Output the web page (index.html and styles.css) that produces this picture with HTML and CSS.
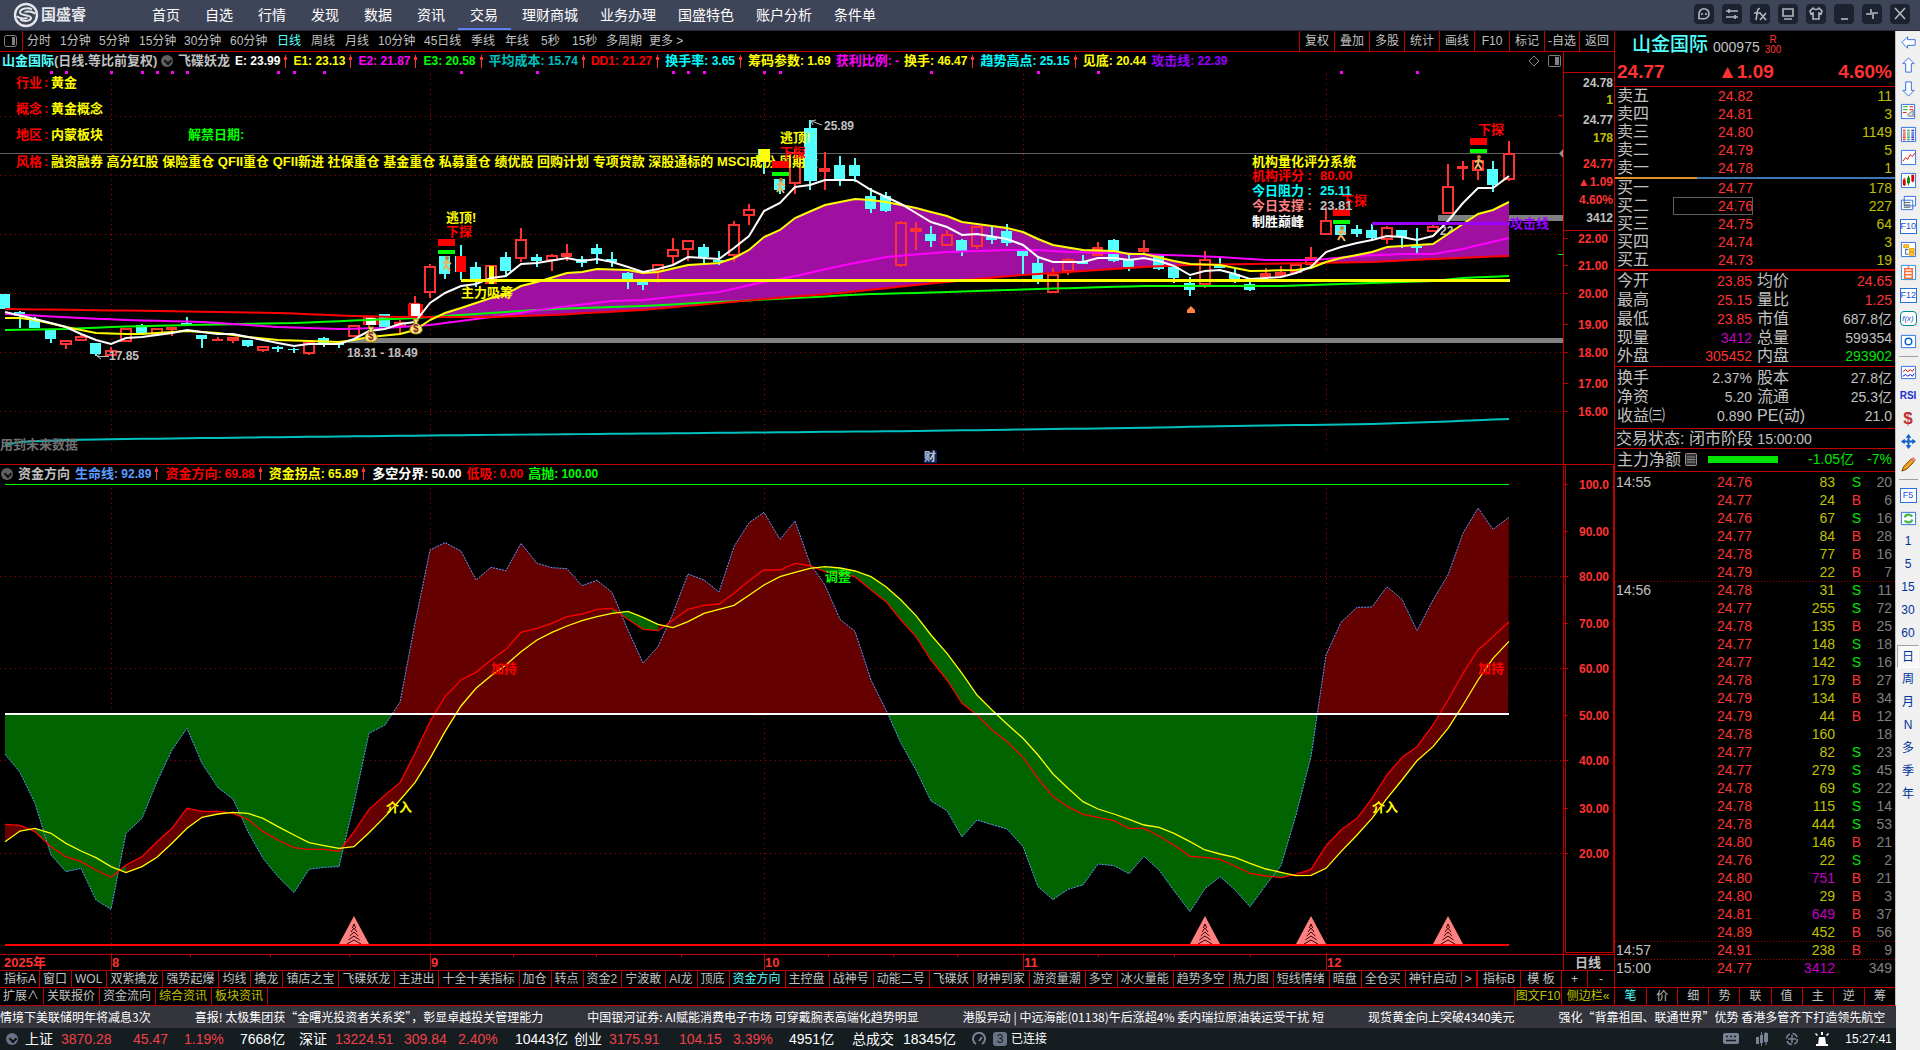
FILE: index.html
```html
<!DOCTYPE html>
<html lang="zh-CN">
<head>
<meta charset="utf-8">
<title>国盛睿 - 山金国际</title>
<link rel="stylesheet" href="styles.css">
</head>
<body>
<header class="topbar">
  <div class="brand">
    <svg width="26" height="26" viewBox="0 0 26 26" fill="none" stroke="#e4e6ea"><circle cx="13" cy="13" r="11" stroke-width="2.4"/><path d="M19 7.500C16 5.500 7 6 7 10.500c0 3.500 11 2 11 5.500 0 3-7 4-11 1.500M22 12c-2-3-10-3-10-1.500M4 14c2 3 10 3 10 1.500" stroke-width="2"/></svg>
    <b>国盛睿</b>
  </div>
  <nav class="mainnav">
    <a href="#">首页</a><a href="#">自选</a><a href="#">行情</a><a href="#">发现</a><a href="#">数据</a><a href="#">资讯</a><a href="#" class="on">交易</a><a href="#">理财商城</a><a href="#">业务办理</a><a href="#">国盛特色</a><a href="#">账户分析</a><a href="#">条件单</a>
  </nav>
  <div class="winbtns">
    <button aria-label="消息"><svg viewBox="0 0 20 20"><path d="M5 14.500V10a5 5 0 1 1 5 4.800z"/><path d="M8 9v2M12 9v2"/></svg></button>
    <button aria-label="设置"><svg viewBox="0 0 20 20"><path d="M4 7h12M4 13h12M7 5v4M13 11v4"/></svg></button>
    <button aria-label="公式"><svg viewBox="0 0 20 20"><path d="M4 9h7M10 4.500C7 4 7.500 8 6 16M10 9l6 7M16 9l-6 7"/></svg></button>
    <button aria-label="屏幕"><svg viewBox="0 0 20 20"><path d="M5 5h10v7H5zM6 15h8"/></svg></button>
    <button aria-label="皮肤"><svg viewBox="0 0 20 20"><path d="M7 4L4 7l1 3 2-1v6h6V9l2 1 1-3-3-3c-1 2-5 2-6 0z"/></svg></button>
    <button aria-label="最小化"><svg viewBox="0 0 20 20"><path d="M7 15h7"/></svg></button>
    <button aria-label="还原"><svg viewBox="0 0 20 20"><path d="M9 5v5H4M11 15v-6h5"/></svg></button>
    <button aria-label="关闭"><svg viewBox="0 0 20 20"><path d="M5 4l10 11M15 4L5 15"/></svg></button>
  </div>
</header>

<div class="shell">
<div class="desk">
<div class="work">
  <main class="charts">
    <div class="periodbar">
      <span class="panelicon"><svg width="13" height="12" viewBox="0 0 13 12"><rect x=".5" y=".5" width="12" height="11" rx="2" fill="none" stroke="#808080"/><path d="M8 2h3v8H8z" fill="#808080"/></svg></span>
      <div class="periods">
        <button>分时</button><button>1分钟</button><button>5分钟</button><button>15分钟</button><button>30分钟</button><button>60分钟</button><button class="on">日线</button><button>周线</button><button>月线</button><button>10分钟</button><button>45日线</button><button>季线</button><button>年线</button><button>5秒</button><button>15秒</button><button>多周期</button><button>更多&nbsp;&gt;</button>
      </div>
      <div class="tools">
        <button>复权</button><button>叠加</button><button>多股</button><button>统计</button><button>画线</button><button>F10</button><button>标记</button><button>-自选</button><button>返回</button>
      </div>
    </div>

    <div class="legend main-legend">
      <span class="stock"><span class="aqua">山金国际</span>(日线.等比前复权)</span>
      <i class="drop"></i>
      <span>飞碟妖龙</span>
      <span class="white"><b>E: 23.99</b><i class="up"></i></span>
      <span class="yellow"><b>E1: 23.13</b><i class="up"></i></span>
      <span class="magenta"><b>E2: 21.87</b><i class="up"></i></span>
      <span class="lime"><b>E3: 20.58</b><i class="up"></i></span>
      <span class="teal">平均成本<b>: 15.74</b><i class="up"></i></span>
      <span class="red"><b>DD1: 21.27</b><i class="up"></i></span>
      <span class="cyan">换手率<b>: 3.65</b><i class="up"></i></span>
      <span class="yellow">筹码参数<b>: 1.69</b></span>
      <span class="magenta">获利比例<b>: -</b></span>
      <span class="yellow">换手<b>: 46.47</b><i class="up"></i></span>
      <span class="cyan">趋势高点<b>: 25.15</b><i class="up"></i></span>
      <span class="yellow">见底<b>: 20.44</b></span>
      <span class="violet">攻击线<b>: 22.39</b></span>
      <span class="corner"><svg width="34" height="12" viewBox="0 0 34 12" fill="none" stroke="#808080"><path d="M6 1l5 5-5 5-5-5z"/><rect x="20.500" y=".5" width="12" height="11" rx="1"/><path d="M27 2h4v8h-4z" fill="#808080" stroke="none"/></svg></span>
    </div>
    <svg id="kline" class="pane kpane" viewBox="0 70 1614 394" preserveAspectRatio="xMidYMid meet"></svg>

    <div class="legend sub-legend">
      <i class="drop"></i>
      <span>资金方向</span>
      <span class="blue">生命线<b>: 92.89</b><i class="up"></i></span>
      <span class="red">资金方向<b>: 69.88</b><i class="up"></i></span>
      <span class="yellow">资金拐点<b>: 65.89</b><i class="up"></i></span>
      <span class="white">多空分界<b>: 50.00</b></span>
      <span class="red">低吸<b>: 0.00</b></span>
      <span class="lime">高抛<b>: 100.00</b></span>
    </div>
    <svg id="flow" class="pane fpane" viewBox="0 482 1614 488" preserveAspectRatio="xMidYMid meet"></svg>

    <div class="tabs">
      <button class="first">指标A</button><button>窗口</button><button>WOL</button><button>双紫擒龙</button><button>强势起爆</button><button>均线</button><button>擒龙</button><button>镇店之宝</button><button>飞碟妖龙</button><button>主进出</button><button>十全十美指标</button><button>加仓</button><button>转点</button><button>资金2</button><button>宁波敢</button><button>AI龙</button><button>顶底</button><button class="on">资金方向</button><button>主控盘</button><button>战神号</button><button>动能二号</button><button>飞碟妖</button><button>财神到家</button><button>游资量潮</button><button>多空</button><button>冰火量能</button><button>趋势多空</button><button>热力图</button><button>短线情绪</button><button>暗盘</button><button>全仓买</button><button>神针启动</button><button>&gt;</button>
      <span class="tabs-end"><button>指标B</button><button>模 板</button><button>+</button><button>-</button></span>
    </div>
    <div class="tabs">
      <button>扩展∧</button><button>关联报价</button><button>资金流向</button><button class="gold">综合资讯</button><button class="gold">板块资讯</button>
      <span class="tabs-end side"><button class="gold">图文F10</button><button class="gold">侧边栏«</button></span>
    </div>
  </main>

  <aside class="quote">
    <div class="qhead">
      <div class="qname"><b>山金国际</b><span>000975</span><small>R<br>300</small></div>
      <div class="qprice"><span>24.77</span><span>▲1.09</span><span>4.60%</span></div>
    </div>
    <table class="book">
      <tr><th>卖五</th><td>24.82</td><td>11</td></tr>
      <tr><th>卖四</th><td>24.81</td><td>3</td></tr>
      <tr><th>卖三</th><td>24.80</td><td>1149</td></tr>
      <tr><th>卖二</th><td>24.79</td><td>5</td></tr>
      <tr><th>卖一</th><td>24.78</td><td>1</td></tr>
    </table>
    <div class="ratio"></div>
    <table class="book bids">
      <tr><th>买一</th><td>24.77</td><td>178</td></tr>
      <tr class="mark"><th>买二</th><td>24.76</td><td>227</td></tr>
      <tr><th>买三</th><td>24.75</td><td>64</td></tr>
      <tr><th>买四</th><td>24.74</td><td>3</td></tr>
      <tr><th>买五</th><td>24.73</td><td>19</td></tr>
    </table>
    <table class="stats">
      <tr><th>今开</th><td class="up-c">23.85</td><th>均价</th><td class="up-c">24.65</td></tr>
      <tr><th>最高</th><td class="up-c">25.15</td><th>量比</th><td class="up-c">1.25</td></tr>
      <tr><th>最低</th><td class="up-c">23.85</td><th>市值</th><td>687.8亿</td></tr>
      <tr><th>现量</th><td class="big">3412</td><th>总量</th><td>599354</td></tr>
      <tr><th>外盘</th><td class="up-c">305452</th><th>内盘</th><td class="dn-c">293902</td></tr>
    </table>
    <table class="stats basics">
      <tr><th>换手</th><td>2.37%</td><th>股本</th><td>27.8亿</td></tr>
      <tr><th>净资</th><td>5.20</td><th>流通</th><td>25.3亿</td></tr>
      <tr><th>收益㈢</th><td>0.890</td><th>PE(动)</th><td>21.0</td></tr>
    </table>
    <div class="state">交易状态: 闭市阶段 <span>15:00:00</span></div>
    <div class="netflow"><span>主力净额</span><svg width="12" height="13" viewBox="0 0 12 13"><rect x=".5" y=".5" width="11" height="12" rx="1" fill="#333" stroke="#909090"/><path d="M2 4h8M2 6.500h8M2 9h8" stroke="#909090"/></svg><i></i><b>-1.05亿</b><b>-7%</b></div>
    <table class="ticks"><tbody id="ticks"></tbody></table>
    <div class="qtabs"><button class="on">笔</button><button>价</button><button>细</button><button>势</button><button>联</button><button>值</button><button>主</button><button>逆</button><button>筹</button></div>
  </aside>
</div>

<div class="ticker"><span>情境下美联储明年将减息3次</span><span>喜报! 太极集团获“金曙光投资者关系奖”，彰显卓越投关管理能力</span><span>中国银河证券: AI赋能消费电子市场 可穿戴腕表高端化趋势明显</span><span>港股异动 | 中远海能(01138)午后涨超4% 委内瑞拉原油装运受干扰 短</span><span>现货黄金向上突破4340美元</span><span>强化“背靠祖国、联通世界”优势 香港多管齐下打造领先航空</span></div>

<footer class="status">
  <i class="drop"></i>
  <dl class="indices">
    <dt>上证</dt><dd class="r">3870.28</dd><dd class="r">45.47</dd><dd class="r">1.19%</dd><dd>7668亿</dd>
    <dt>深证</dt><dd class="r">13224.51</dd><dd class="r">309.84</dd><dd class="r">2.40%</dd><dd>10443亿</dd>
    <dt>创业</dt><dd class="r">3175.91</dd><dd class="r">104.15</dd><dd class="r">3.39%</dd><dd>4951亿</dd>
    <dt>总成交</dt><dd>18345亿</dd>
  </dl>
  <svg width="14" height="14" viewBox="0 0 14 14" fill="none" stroke="#7a8296" stroke-width="2"><path d="M4 12a6 6 0 1 1 6 0M7 9l3-4"/></svg>
  <span class="badge">3</span><span class="conn">已连接</span>
  <div class="sysicons">
    <svg width="16" height="12" viewBox="0 0 16 12"><rect width="16" height="11" rx="2" fill="#7a8296"/><path d="M3 3.500h2M7 3.500h2M11 3.500h2M3 7.500h10" stroke="#151d21" stroke-width="1.500"/></svg>
    <svg width="14" height="14" viewBox="0 0 14 14" fill="#7a8296"><path d="M1 5h3v7H1zM5 3h3v8H5zM9 1h4v9H9zM6 0h1v14H6zM10.500 0h1v13h-1z"/></svg>
    <svg width="14" height="14" viewBox="0 0 14 14" fill="none" stroke="#7a8296" stroke-width="1.500"><circle cx="7" cy="7" r="5.500" stroke-dasharray="6 2.600"/><path d="M7 3v8M3 7h8"/></svg>
    <svg width="14" height="14" viewBox="0 0 14 14" fill="#fff"><path d="M4 5h6l1 7h2v2H1v-2h2zM1 1l2 2-1 1-2-2zM13 1l-2 2 1 1 2-2zM6 0h2v3H6z"/></svg>
    <time>15:27:41</time>
  </div>
</footer>
</div>

<nav class="rail">
  <button aria-label="后退"><svg viewBox="0 0 18 18"><path d="M2 9l6-6v3h8v6H8v3z" fill="#fff" stroke="#2a6fe0"/></svg></button>
  <button aria-label="上移"><svg viewBox="0 0 18 18"><path d="M9 1l6 6h-3v9H6V7H3z" fill="#fff" stroke="#2a6fe0"/></svg></button>
  <button aria-label="下移"><svg viewBox="0 0 18 18"><path d="M9 17l6-6h-3V2H6v9H3z" fill="#fff" stroke="#2a6fe0"/></svg></button>
  <button aria-label="报价"><svg viewBox="0 0 18 18"><path d="M1.500 1.500h14v15h-14z" fill="#fff" stroke="#2a6fe0"/><path d="M3 4h5M3 7h5" stroke="#0a0"/><path d="M10 4h4M10 7h4M3 10h4" stroke="#d00"/><path d="M8 12l6-4v6H9z" fill="#ddd" stroke="#777"/></svg></button>
  <button aria-label="列表"><svg viewBox="0 0 18 18"><path d="M1.500 1.500h15v15h-15z" fill="#fff" stroke="#2a6fe0"/><g stroke-dasharray="1 1" stroke-width="3"><path d="M4.500 4v11" stroke="#d00"/><path d="M9 4v11" stroke="#093"/><path d="M13.500 4v11" stroke="#00c"/></g></svg></button>
  <button aria-label="分时"><svg viewBox="0 0 18 18"><path d="M1.500 1.500h15v15h-15z" fill="#fff" stroke="#2a6fe0"/><path d="M3 13l3-4 2 2 3-5 2 2 3-4" fill="none" stroke="#d00"/></svg></button>
  <button aria-label="K线"><svg viewBox="0 0 18 18"><path d="M1.500 1.500h15v15h-15z" fill="#fff" stroke="#2a6fe0"/><path d="M4 9h1v4H4zM13 4h1v5h-1z" stroke="#d00" stroke-width="2"/><path d="M4.500 6v9M13.500 3v8" stroke="#d00"/><path d="M8.500 7h1v4h-1z" stroke="#080" stroke-width="2"/><path d="M9 4v10" stroke="#080"/></svg></button>
  <button aria-label="资料"><svg viewBox="0 0 18 18"><path d="M4.500 1.500h12v10h-12zM1.500 5.500h12v10h-12z" fill="#fff" stroke="#2a6fe0"/><path d="M4 8h7M4 10.500h7M4 13h7" stroke="#555"/></svg></button>
  <button class="box">F10</button>
  <button aria-label="树"><svg viewBox="0 0 18 18"><path d="M1.500 1.500h15v15h-15z" fill="#fff" stroke="#2a6fe0"/><path d="M4 4h5v3H4zM10 8h5v3h-5zM10 12h5v3h-5z" fill="#fc3" stroke="#e90"/><path d="M6 8v6h3M6 9h3" stroke="#36a" fill="none"/></svg></button>
  <button aria-label="自选"><svg viewBox="0 0 18 18"><path d="M1.500 1.500h15v15h-15z" fill="#fff" stroke="#1a8fe0"/><path d="M5 5h8v10H5zM5 8h8M5 11.500h8M9 2.500V5" fill="#fff" stroke="#f97040" stroke-width="1.600"/></svg></button>
  <button class="box">F12</button>
  <button class="box fx">f(x)</button>
  <button aria-label="圆"><svg viewBox="0 0 18 18"><path d="M1.500 2.500h15v13h-15z" fill="#fff" stroke="#2a6fe0"/><circle cx="9" cy="9" r="3.500" fill="none" stroke="#06c" stroke-width="1.500"/></svg></button>
  <hr>
  <button aria-label="波浪"><svg viewBox="0 0 18 18"><path d="M1.500 2.500h15v13h-15z" fill="#fff" stroke="#2a6fe0"/><path d="M3 8l3-2 2 2 3-2 2 2 2-3" fill="none" stroke="#d00"/><path d="M3 13l3-2 2 2 3-2 2 2 2-3" fill="none" stroke="#00c"/></svg></button>
  <button class="rsi">RSI</button>
  <button class="dollar">$</button>
  <button aria-label="移动"><svg viewBox="0 0 18 18"><path d="M9 1l3 4h-2v3h3V6l4 3-4 3v-2h-3v3h2l-3 4-3-4h2v-3H5v2L1 9l4-3v2h3V5H6z" fill="#0a5fc8"/></svg></button>
  <button aria-label="画笔"><svg viewBox="0 0 18 18"><path d="M2 16l2-5 8-8 3 3-8 8z" fill="#f0a020" stroke="#704000"/><path d="M12 3l2-2 3 3-2 2z" fill="#f08080"/></svg></button>
  <hr>
  <button class="box">F5</button>
  <button aria-label="刷新"><svg viewBox="0 0 18 18"><path d="M1.500 2.500h15v13h-15z" fill="#fff" stroke="#2a6fe0"/><path d="M5 8c1-4 6-4 8-1M13 10c-1 4-6 4-8 1" fill="none" stroke="#4b4" stroke-width="2.500"/></svg></button>
  <button>1</button><button>5</button><button>15</button><button>30</button><button>60</button><button class="pressed">日</button><button>周</button><button>月</button><button>N</button><button>多</button><button>季</button><button>年</button>
</nav>
</div>
<script src="chart.js"></script>
</body>
</html>
```
FILE: styles.css
```css
* { box-sizing: border-box; }
body {
  margin: 0;
  background: #000;
  color: #c0c0c0;
  font: 12px/16px "Liberation Sans", "Noto Sans CJK SC", sans-serif;
  overflow-x: hidden;
}
button {
  margin: 0; padding: 0; border: 0; background: none;
  color: inherit; font: inherit; white-space: nowrap; cursor: pointer;
}
a { color: inherit; text-decoration: none; }
table { border-collapse: collapse; width: 100%; table-layout: fixed; }
th, td { padding: 0; font-weight: normal; text-align: right; white-space: nowrap; }
th { text-align: left; }

/* colours of the indicator values */
.aqua { color: #54ffff; }
.white { color: #fff; }
.yellow { color: #ff0; }
.magenta { color: #f0f; }
.lime { color: #0f0; }
.teal { color: #00c0c0; }
.red { color: #f00; }
.cyan { color: #0ff; }
.violet { color: #90f; }
.blue { color: #5a9cff; }

/* top bar */
.topbar { display: flex; height: 31px; padding: 0 10px 0 13px; background: #3f4558; border-bottom: 1px solid #23283a; color: #fff; }
.brand { display: flex; align-items: center; width: 126px; gap: 2px; font-size: 15px; color: #e4e6ea; }
.mainnav { display: flex; flex: 1; font-size: 14px; line-height: 30px; }
.mainnav a { padding: 0 11px; }
.mainnav a:nth-child(-n+7) { padding: 0 13px 0 12px; }
.mainnav a:first-child { padding-left: 13px; }
.mainnav .on { border-bottom: 2px solid #5b82f0; }
.winbtns { display: flex; gap: 8px; padding-top: 4px; }
.winbtns button { width: 20px; height: 20px; border-radius: 4px; background: #1c2230; }
.winbtns svg { display: block; width: 20px; height: 20px; fill: none; stroke: #b4b8c0; stroke-width: 1.6; }

.shell { display: flex; }
.desk { flex: 1; min-width: 0; }
.work { display: flex; }
.charts { flex: 1; min-width: 0; border-right: 1px solid #c00000; }

/* periods and tools */
.periodbar { display: flex; height: 21px; border-bottom: 1px solid #c00000; line-height: 20px; }
.panelicon { width: 23px; padding: 4px 0 0 4px; border-right: 1px solid #c00000; line-height: 0; }
.periods { flex: 1; display: grid; justify-content: start; padding-left: 4px;
  grid-template-columns: 33px 39px 40px 45px 46px 47px 34px 34px 33px 46px 47px 34px 36px 31px 34px 43px 50px; }
.periods button { text-align: left; }
.periods .on { color: #54ffff; }
.tools { display: grid; grid-template-columns: repeat(9, 35px); }
.tools button { border-left: 1px solid #c00000; }

/* indicator legends */
.legend { display: flex; align-items: center; font-size: 13px; font-weight: bold; white-space: nowrap; }
.legend > span { display: flex; align-items: center; white-space: pre; }
.legend b { font-size: 12px; }
.main-legend { height: 18px; gap: 5px; padding-left: 2px; }
.main-legend .stock { width: 154px; }
.main-legend .corner { margin-left: auto; padding-right: 52px; }
.sub-legend { height: 18px; gap: 5px; padding-left: 1px; border-top: 1px solid #c00000; }
.up { width: 5px; height: 13px; margin: 0 0 0 3px; background: linear-gradient(#ff3232, #ff3232) center / 1px 100% no-repeat, linear-gradient(#ff3232, #ff3232) 1px 2px / 3px 3px no-repeat; }
.sub-legend .up { margin-right: 1px; }
.drop { display: block; flex: none; width: 12px; height: 12px; border-radius: 6px; background: #606060; }
.drop::after { content: ""; display: block; width: 4px; height: 4px; margin: 3px 0 0 4px; border: solid #111; border-width: 0 2px 2px 0; transform: rotate(45deg); }

/* chart panes */
.pane { display: block; width: 100%; overflow: visible; font-size: 13px; font-weight: bold; }
.kpane { height: 394px; }
.fpane { height: 488px; }
.axis-text { font-size: 12px; fill: #ff3232; text-anchor: end; }
.grid-line { stroke: #b00000; stroke-dasharray: 1 4; fill: none; }
.frame { stroke: #c00000; fill: none; }
.gray-text { fill: #c0c0c0; font-size: 12px; }
.dim-text { fill: #707070; }
.bag-text { fill: #802020; font-size: 10px; }

/* bottom tabs */
.tabs { display: flex; height: 17px; border-top: 1px solid #c00000; line-height: 16px; }
.tabs + .tabs { height: 19px; border-bottom: 1px solid #c00000; line-height: 17px; }
.tabs button { padding: 0 4px 0 3px; border-right: 1px solid #c00000; }
.tabs .first { padding: 0 3px 0 4px; }
.tabs .on { color: #54ffff; }
.tabs .gold { color: #c0c000; }
.tabs-end { display: grid; grid-template-columns: 43px 41px 26px 26px; margin-left: auto; border-left: 1px solid #c00000; }
.tabs-end.side { grid-template-columns: 47px 52px; }
.tabs-end button:last-child { border-right: 0; }
.tabs-end button { padding: 0; }

/* quote panel */
.quote { display: flex; flex-direction: column; width: 281px; border-right: 1px solid #c0c0c0; font-size: 14px; border-bottom: 1px solid #c00000; }
.qhead { height: 56px; border-bottom: 1px solid #c00000; }
.qname { display: flex; align-items: center; gap: 5px; height: 28px; padding-left: 17px; }
.qname b { color: #54ffff; font-size: 19px; font-weight: 500; line-height: 24px; }
.qname span { padding-top: 3px; }
.qname small { color: #ff3232; font-size: 10px; line-height: 10px; text-align: center; }
.qprice { display: grid; grid-template-columns: 101px 1fr auto; padding: 0 3px 0 2px; color: #ff3232; font-size: 19px; line-height: 26px; font-weight: bold; }
.book td, .book th { height: 18px; line-height: 18px; }
.book th, .stats th { padding-left: 2px; font-size: 16px; line-height: 18px; }
.book th { width: 58px; }
.book td:nth-child(2) { width: 80px; color: #ff3232; }
.book td:nth-child(3) { padding-right: 3px; color: #c0c000; }
.book .mark td:nth-child(2) { outline: 1px solid #606060; outline-offset: -1px; }
.ratio { height: 2px; background: linear-gradient(90deg, #e0902a 82px, #3c78b4 82px); }
.bids { border-bottom: 2px solid #c00000; }
.stats td, .stats th { height: 19px; }
.stats th { width: 64px; }
.stats td:nth-child(2) { width: 73px; }
.stats th:nth-child(3) { padding-left: 5px; }
.stats td:nth-child(4) { padding-right: 3px; }
.stats { border-bottom: 1px solid #c00000; }
.basics { margin: 2px 0; border: 0; }
.up-c { color: #ff3232; }
.dn-c { color: #00e600; }
.big { color: #c000c0; }
.state, .netflow { height: 20px; padding-left: 1px; border-top: 1px solid #c00000; font-size: 16px; line-height: 19px; }
.state span { font-size: 14px; }
.netflow { display: flex; align-items: center; gap: 4px; height: 24px; padding: 0 3px 0 2px; border-bottom: 1px solid #c00000; color: #c0c0c0; }
.netflow i { width: 70px; height: 7px; margin: 0 auto 0 7px; background: #00e600; }
.netflow b { color: #00e600; font-size: 14px; font-weight: normal; }
.netflow b + b { width: 34px; text-align: right; }
.ticks { margin-top: 1px; }
.ticks td { height: 18px; line-height: 18px; color: #ff3232; }
.ticks td:nth-child(1) { width: 48px; padding-left: 1px; color: #c0c0c0; text-align: left; }
.ticks td:nth-child(2) { width: 89px; }
.ticks td:nth-child(3) { width: 83px; color: #c0c000; }
.ticks td:nth-child(4) { width: 26px; }
.ticks td:nth-child(5) { padding-right: 3px; color: #808080; }
.ticks td.S { color: #00e600; }
.ticks td.large { color: #c000c0; }
.ticks .split td { background: repeating-linear-gradient(90deg, #a00000 0 1px, transparent 1px 3px) top / 100% 1px no-repeat; }
.qtabs { display: grid; grid-template-columns: repeat(9, 1fr); height: 18px; margin-top: auto; border-top: 1px solid #c00000; font-size: 12px; line-height: 17px; }
.qtabs button + button { border-left: 1px solid #c00000; }
.qtabs .on { color: #54ffff; }

/* news ticker and status bar */
.ticker { display: flex; gap: 44px; height: 22px; overflow: hidden; background: #33343c; color: #fff; font-family: "Noto Sans CJK SC", sans-serif; line-height: 22px; white-space: nowrap; }
.status { display: flex; align-items: center; height: 22px; padding: 0 4px 0 6px; background: #151d21; color: #fff; font-size: 14px; }
.status .drop { background: #6a7288; }
.indices { display: grid; flex: none; margin: 0 15px 0 7px; white-space: nowrap;
  grid-template-columns: 36px 72px 51px 56px 59px 36px 69px 54px 57px 59px 35px 70px 54px 56px 63px 51px 54px; }
.indices dd { margin: 0; }
.indices .r { color: #f04048; }
.badge { width: 14px; height: 14px; margin: 0 4px 0 7px; border-radius: 3px; background: #6a7288; color: #151d21; font-size: 12px; line-height: 14px; text-align: center; }
.conn { font-size: 12px; }
.sysicons { display: flex; align-items: center; gap: 16px; margin-left: auto; }
.sysicons time { font-size: 12px; }

/* icon rail */
.rail { display: flex; flex-direction: column; align-items: center; width: 24px; background: #f0f0f0; color: #003399; font-size: 12px; }
.rail button { flex: none; width: 22px; height: 23px; line-height: 23px; }
.rail svg { display: block; width: 17px; height: 17px; margin: 0 auto; }
.rail hr { width: 19px; height: 1px; margin: 3px 0 4px; border: 0; background: #a0a0a0; }
.rail .box { width: 17px; height: 15px; margin: 4px 0; border: 1px solid #2a6fe0; background: #fff; color: #1a50d0; font-size: 9px; line-height: 13px; }
.rail .fx { border-radius: 4px; border-color: #088; font-style: italic; font-size: 8px; }
.rail .rsi { color: #2030d0; font-size: 10px; font-weight: bold; }
.rail .dollar { color: #c03030; font-size: 17px; font-weight: bold; }
.rail .pressed { border: 1px solid; border-color: #a0a0a0 #fff #fff #a0a0a0; background: #f8f8f8; }
```
FILE: chart.js
```js
// Every pane shares one horizontal scale: 100 bars, first one centred on x = 5.
const STEP = 15.187;
const barX = i => Math.round(5 + STEP * i);
const months = [[111, '8'], [430, '9'], [764, '10'], [1023, '11'], [1326, '12']];

const out = { k: [], f: [] };
const crisp = 'shape-rendering="crispEdges"';
const rect = (x, y, w, h, c) => `<rect x="${x}" y="${y}" width="${w}" height="${h}" fill="${c}" ${crisp}/>`;
const line = (x1, y1, x2, y2, c, w = 1) => `<path d="M${x1} ${y1}L${x2} ${y2}" stroke="${c}" stroke-width="${w}" fill="none"/>`;
const text = (x, y, s, c, cls = '') => `<text x="${x}" y="${y}" fill="${c}" class="${cls}">${s}</text>`;
const gridH = y => `<path class="grid-line" d="M0 ${y}.5H1563"/>`;
const gridV = (x, a, b) => `<path class="grid-line" d="M${x}.5 ${a}V${b}"/>`;
const poly = (pts, c, w, extra = '') =>
  `<polyline points="${pts.map(p => p.join()).join(' ')}" fill="none" stroke="${c}" stroke-width="${w}" ${extra}/>`;

// "index:y" pairs, missing bars are interpolated
function series(src) {
  const keys = src.split(' ').map(s => s.split(':').map(Number));
  const res = [];
  for (let k = 0; k < keys.length - 1; k++) {
    const [a, ya] = keys[k], [b, yb] = keys[k + 1];
    for (let i = a; i < b; i++) res[i] = ya + (yb - ya) * (i - a) / (b - a);
  }
  const last = keys[keys.length - 1];
  res[last[0]] = last[1];
  return res;
}
const toPts = s => s.map((y, i) => [barX(i), y]);

/* ---------- candlestick pane ---------- */
const K = out.k;
const fast = series('0:312 2:319 4:327 5:334 6:340 7:344 8:338 9:337 11:333 12:330 14:334 15:334 17:340 19:346 20:344 22:344 23:339 24:331 25:329 26:324 27:322 28:303 29:293 30:286 31:284 32:278 33:276 34:264 35:263 37:258 38:261 39:259 40:262 41:267 42:272 43:269 44:265 45:257 47:259 48:248 49:236 50:211 51:203 52:187 53:185 54:180 56:180 57:190 58:197 59:204 60:213 61:222 62:227 63:235 64:234 66:239 67:245 68:257 69:262 71:262 72:258 73:258 74:260 75:258 76:261 77:266 78:275 79:271 80:270 81:274 82:279 84:277 85:273 86:267 87:252 88:247 89:243 90:240 91:236 92:237 93:240 94:236 95:221 96:203 97:188 98:188 99:176');
const mid = series('0:318 1:318 2:320 4:327 6:333 8:334 9:334 11:332 12:331 14:333 16:337 18:340 20:341 22:342 23:340 24:337 26:334 27:330 28:320 29:313 30:308 31:303 32:298 33:294 34:286 35:282 37:273 38:272 39:269 41:270 42:273 43:272 45:265 47:263 48:258 49:250 50:237 51:230 52:218 54:205 56:199 57:200 58:202 60:208 62:216 63:222 65:226 66:228 67:232 68:239 69:245 71:250 73:251 74:254 75:254 77:261 78:264 80:265 82:271 85:270 86:268 87:262 88:258 90:252 91:247 94:244 95:234 96:224 97:214 98:210 99:202');
const slow = series('0:314 5:318 8:320 13:322 18:327 22:329 25:328 28:325 30:321 33:315 36:308 40:301 42:300 47:292 50:282 52:276 55:266 58:257 62:252 66:250 68:250 70:252 73:253 80:257 83:260 86:260 87:259 89:256 92:254 94:254 96:249 99:238');
const base = series('0:309 5:310 10:311 18:313 23:316 26:317 32:317 36:315 42:310 50:299 55:293 60:285 64:279 67:275 70:272 73:269 75:267 78:265 82:264 90:262 94:259 99:256');
const e3 = series('0:330 4:329 7:327 12:325 19:323 24:320 27:318 30:315 33:312 36:309 40:307 42:306 47:302 52:298 57:294 60:293 68:289 75:286 84:286 90:283 94:281 96:278 99:276');
const cost = series('0:445 1:442 4:440 8:439 19:437 31:435 39:434 60:431 74:428 81:426 90:424 94:422 99:419');

[116, 175, 234, 293, 352, 411].forEach(y => K.push(gridH(y)));
months.forEach(m => K.push(gridV(m[0], 74, 452)));

// rising channel between the middle and base averages
K.push('<path d="M345 343L362 338H1563V343Z" fill="#808080"/>');
K.push(rect(1438, 215, 125, 6, '#808080'));
K.push(text(1440, 235, '22', '#c0c0c0', 'gray-text'));
[[28, 78], [87, 99]].forEach(([a, b]) => {
  const top = toPts(mid).slice(a, b + 1), low = toPts(base).slice(a, b + 1).reverse();
  K.push(`<polygon fill="#a010a0" points="${top.concat(low).map(p => p.join()).join(' ')}"/>`);
});
K.push(line(0, 153.5, 1563, 153.5, '#606060'));

// kind, high, body top, body bottom, low; c falling, h rising, f flat rising
const candles = `c294,294,309,309 c311,312,316,328 c317,320,328,328 c330,330,339,343 h340,340,345,349 h334,336,341,341 c343,343,354,356 h347,350,356,356 h328,328,342,342 c324,325,334,335
h328,328,335,335 f327,327,330,336 c317,323,325,325 c335,335,339,348 f337,339,341,341 h337,337,341,343 c340,340,346,347 h346,346,351,352 c346,347,349,352 c348,349,350,353
h342,342,354,355 c337,338,343,347 c343,343,345,348 h325,325,337,337 f317,317,325,328 c314,314,327,327 h320,322,327,335 f296,303,317,318 h264,266,293,298 c256,256,274,279
c245,256,272,280 c262,267,279,287 h265,265,284,284 c252,257,271,276 h228,239,259,262 c254,257,261,267 h254,255,261,271 f244,253,257,261 c256,259,263,267 c244,248,254,264
c252,259,262,267 c272,273,279,289 c279,281,285,290 h264,264,272,283 h238,249,257,265 h240,240,250,261 c244,247,257,263 c251,260,262,265 h221,224,256,262 h204,209,216,225
c149,149,161,174 c179,179,190,194 h150,152,184,194 c120,128,181,190 f152,168,172,190 c156,165,179,186 c158,165,176,182 c188,196,209,213 c192,196,211,212 h221,222,266,267
h222,228,232,250 c226,234,241,247 h230,234,246,246 c239,240,252,256 h226,226,247,249 c227,237,240,244 c224,231,243,246 c251,251,256,274 c258,263,279,284 h268,274,293,293
h258,259,272,275 c255,261,264,264 f242,247,256,256 c239,240,261,262 c255,259,267,271 f240,248,252,255 c254,254,269,270 c267,267,278,283 c277,283,290,296 h251,259,285,288
c258,264,268,268 c268,274,282,283 c282,284,290,291 f268,273,277,278 f266,272,276,278 h264,264,273,274 h247,257,265,266 h207,220,235,235 c225,225,235,236 c225,229,234,237
c224,230,238,240 h226,227,240,244 c230,230,237,248 c228,246,248,253 h225,226,232,232 h164,186,214,214 f161,166,169,180 h160,160,171,180 c161,169,185,192 h141,153,180,181`.split(/\s+/);
candles.forEach((s, i) => {
  const kind = s[0], [hi, top, bot, lo] = s.slice(1).split(',').map(Number);
  const x = barX(i), c = kind === 'c' ? '#54ffff' : '#ff3232';
  if (hi < top) K.push(rect(x - 1, hi, 2, top - hi, c));
  if (lo > bot) K.push(rect(x - 1, bot, 2, lo - bot, c));
  if (kind === 'h') K.push(`<rect x="${x - 5}" y="${top + 1}" width="10" height="${bot - top - 2}" fill="none" stroke="${c}" stroke-width="2" ${crisp}/>`);
  else K.push(rect(x - 6, top, 11, bot - top, c));
});
K.push(rect(364, 318, 15, 7, '#f00'), rect(366, 318, 10, 7, '#fff'), rect(408, 304, 15, 13, '#f00'), rect(411, 304, 9, 13, '#fff'));
K.push(rect(456, 256, 10, 16, '#f00'), rect(489, 266, 5, 18, '#ff0'), rect(759, 149, 11, 13, '#ff0'));

K.push(poly(toPts(cost), '#00c0c0', 2));
K.push(poly(toPts(e3), '#0f0', 2), poly(toPts(slow), '#f0f', 2), poly(toPts(base), '#f00', 2));
K.push(poly(toPts(mid), '#ff0', 2), poly(toPts(fast), '#fff', 2));
K.push(rect(461, 279, 1049, 3, '#ff0'), rect(1372, 222, 138, 3, '#90f'));

// stock profile
[[87, '行业', '黄金'], [113, '概念', '黄金概念'], [139, '地区', '内蒙板块'],
 [166, '风格', '融资融券 高分红股 保险重仓 QFII重仓 QFII新进 社保重仓 基金重仓 私募重仓 绩优股 回购计划 专项贷款 深股通标的 MSCI成份 周期股']]
  .forEach(([y, k, v]) => K.push(text(16, y, k, '#f00'), text(44, y, ':', '#f00'), text(51, y, v, '#ff0')));
K.push(text(188, 139, '解禁日期:', '#0f0'));

// escape signals: label, red and green blocks, running figure
const runner = (x, y) => `<path d="M${x} ${y + 3}l-1 5 4 6M${x - 1} ${y + 8}l-3 5M${x - 4} ${y + 6}l4-2 4 3" stroke="#f0b060" stroke-width="2" fill="none"/><circle cx="${x}" cy="${y + 1}" r="2" fill="#c08030"/>`;
[[447, 239], [781, 161], [1342, 209], [1479, 138]].forEach(([x, y]) =>
  K.push(rect(x - 9, y, 17, 7, '#f00'), rect(x - 9, y + 11, 17, 4, '#0f0'), runner(x, y + 18)));
K.push(text(446, 222, '逃顶!', '#ff0'), text(446, 236, '下探', '#f00'));
K.push(rect(806, 128, 11, 53, '#54ffff'));
K.push(text(780, 142, '逃顶!', '#ff0'), text(780, 157, '下探', '#f00'));
K.push(text(1341, 205, '下探', '#f00'), text(1478, 134, '下探', '#f00'));

const bag = (x, y) => `<path d="M${x - 3} ${y}h6l-2 4c8 5 6 11-1 11s-9-6-1-11z" fill="#ffe680" stroke="#a08000"/><text x="${x - 3}" y="${y + 13}" class="bag-text">$</text>`;
K.push(bag(371, 327), bag(416, 319));

K.push(text(1252, 166, '机构量化评分系统', '#ff0'));
[[180, '机构评分', '80.00', '#f00', '#f00'], [195, '今日阻力', '25.11', '#0ff', '#0ff'], [210, '今日支撑', '23.81', '#ff8080', '#c0c0c0']]
  .forEach(([y, k, v, a, b]) => K.push(text(1252, y, k + ' :', a), text(1320, y, v, b)));
K.push(text(1252, 226, '制胜巅峰', '#fff'), text(1510, 228, '攻击线', '#90f'));
K.push(text(461, 297, '主力吸筹', '#ff0'), text(0, 449, '用到未来数据', '', 'dim-text'));
K.push(text(109, 360, '17.85', '', 'gray-text'), text(347, 357, '18.31 - 18.49', '', 'gray-text'), text(824, 130, '25.89', '', 'gray-text'));
K.push('<path d="M97 356.500h12M97 356l4-3M97 356l4 3M811 121l11 4M811 121l5-1M811 121l2 4" stroke="#c0c0c0" fill="none"/>');
K.push(rect(924, 451, 13, 12, '#002a70'), text(924, 461, '财', '#fff', 'gray-text'));
K.push('<path d="M1187 313v-3l4-4 4 4v3z" fill="#ff8040"/>');
K.push(rect(1558, 254, 5, 1, '#0f0'));
[3, 4, 7, 9, 10, 11, 12, 18, 19, 21, 30, 35, 44, 45, 46, 50, 51, 61, 68, 72, 88, 93].forEach(i => K.push(rect(barX(i) - 1, 71, 3, 3, '#f0f')));

// price axis with the pinned quote box
K.push(`<path class="frame" ${crisp} d="M1563.5 52V464M1563 72.500h51M1563 230.500h51M1558 115.500h5"/>`);
K.push('<path d="M1563 149v9l-4-4.500z" fill="#909090"/>');
[[87, '24.78', '#c0c0c0'], [104, '1', '#c0c000'], [124, '24.77', '#c0c0c0'], [142, '178', '#c0c000'], [168, '24.77', '#ff3232'], [186, '▲1.09', '#ff3232'], [204, '4.60%', '#ff3232'], [222, '3412', '#c0c0c0']]
  .forEach(([y, s, c]) => K.push(`<text x="1613" y="${y}" class="axis-text" style="fill:${c}">${s}</text>`));
[[243, '22.00'], [270, '21.00'], [298, '20.00'], [329, '19.00'], [357, '18.00'], [388, '17.00'], [416, '16.00']]
  .forEach(([y, s]) => K.push(text(1608, y, s, '', 'axis-text'), rect(1564, y - 5, 4, 1, '#c00000')));
document.getElementById('kline').innerHTML = K.join('');

/* ---------- fund direction pane ---------- */
// Samples are thirds of a pixel below y = 470; the 50 level is at y = 714.
const F = out.f;
const px = s => s.split(' ').map((v, i) => [barX(i), 470 + v / 3]);
const life = px('853 907 1000 1155 1205 1195 1290 1318 1090 1045 935 840 775 880 953 987 1085 1165 1220 1268 1198 1192 1190 1000 790 765 697 460 240 218 243 330 292 302 220 280 293 296 347 331 367 480 579 530 430 312 330 366 230 158 127 208 153 280 345 448 484 630 720 820 900 993 1022 1101 1050 1064 1077 1130 1250 1289 1258 1245 1182 1187 1211 1159 1200 1262 1325 1256 1220 1260 1310 1245 1187 1035 860 555 457 412 411 350 388 482 390 315 190 114 178 142');
const dir = px('1063 1066 1085 1130 1160 1175 1200 1222 1185 1160 1115 1075 1015 1024 1024 1030 1048 1085 1110 1133 1138 1138 1144 1085 1018 975 938 850 755 680 630 607 570 538 487 475 460 440 432 418 415 448 478 482 450 418 406 402 370 332 300 300 280 287 305 310 320 360 395 450 500 570 630 700 735 780 815 862 925 980 1010 1033 1042 1052 1075 1075 1098 1125 1159 1162 1168 1188 1210 1218 1223 1213 1198 1128 1080 1045 985 915 862 830 765 690 610 540 500 455');
const turn = px('1115 1083 1075 1090 1120 1143 1163 1190 1208 1190 1162 1120 1075 1042 1032 1027 1030 1045 1070 1095 1118 1127 1135 1130 1088 1040 990 938 865 785 708 655 617 585 545 510 487 468 452 440 430 424 442 463 473 455 430 418 406 376 345 320 307 295 290 294 303 320 350 390 437 495 550 610 675 720 762 805 855 912 955 995 1017 1032 1048 1065 1072 1090 1115 1140 1152 1162 1180 1197 1207 1217 1216 1195 1145 1095 1045 985 930 872 830 775 705 630 565 514');

[576, 668, 760, 853].forEach(y => F.push(gridH(y)));
months.forEach(m => F.push(gridV(m[0], 488, 954)));
const area = `M5 714L${life.map(p => p.join(' ')).join('L')}L1508 714Z`;
F.push('<clipPath id="above"><rect x="0" y="482" width="1563" height="232"/></clipPath><clipPath id="below"><rect x="0" y="714" width="1563" height="240"/></clipPath>');
F.push(`<path d="${area}" fill="#640000" clip-path="url(#above)"/><path d="${area}" fill="#006400" clip-path="url(#below)"/>`);
for (let i = 0; i < 99; i++) {
  const rising = dir[i][1] + dir[i + 1][1] < turn[i][1] + turn[i + 1][1];
  F.push(`<polygon fill="${rising ? '#640000' : '#006400'}" points="${[dir[i], dir[i + 1], turn[i + 1], turn[i]].map(p => p.join()).join(' ')}"/>`);
}
F.push(poly(life, '#5a9cff', 1, 'stroke-dasharray="2 1"'));
F.push(poly(dir, '#f00', 1.3), poly(turn, '#ff0', 1.3));
F.push(rect(5, 484, 1504, 1, '#0f0'), rect(5, 713, 1504, 2, '#fff'), rect(5, 944, 1504, 2, '#f00'));
[354, 1205, 1311, 1448].forEach(x => {
  F.push(`<path d="M${x} 916l15 28h-30z" fill="#ff8080"/>`);
  for (let y = 924; y < 942; y += 4) F.push(`<path d="M${x - (y - 919) / 3} ${y + 4}L${x} ${y}L${x + (y - 919) / 3} ${y + 4}" stroke="#300" stroke-width="1" fill="none"/>`);
});
F.push(text(386, 812, '介入', '#ff0'), text(1372, 812, '介入', '#ff0'), text(491, 673, '加持', '#f00'), text(1478, 673, '加持', '#f00'), text(825, 581, '调整', '#0f0'));

// value axis and dates
F.push(`<path class="frame" ${crisp} d="M1563.5 465V970M1565.500 465V952.500H1613.500V465M0 954.500H1614"/>`);
[[489, '100.0'], [536, '90.00'], [581, '80.00'], [628, '70.00'], [673, '60.00'], [720, '50.00'], [765, '40.00'], [813, '30.00'], [858, '20.00']]
  .forEach(([y, s]) => F.push(text(1609, y, s, '', 'axis-text'), rect(1564, y - 5, 4, 1, '#c00000')));
months.forEach(([x, s]) => F.push(rect(x, 954, 1, 16, '#c00000'), `<text x="${x + 1}" y="967" fill="#ff3232">${s}</text>`));
[190, 270, 349, 513, 596, 681, 828, 893, 957, 1098, 1174, 1250].forEach(x => F.push(rect(x, 954, 1, 3, '#c00000')));
F.push(text(4, 967, '2025年', '#ff3232', 'date'), text(1575, 967, '日线', '#c0c0c0'));
document.getElementById('flow').innerHTML = F.join('');

/* ---------- trade ticks ---------- */
const ticks = `24.76 83 S 20|24.77 24 B 6|24.76 67 S 16|24.77 84 B 28|24.78 77 B 16|24.79 22 B 7|24.78 31 S 11|24.77 255 S 72|24.78 135 B 25|24.77 148 S 18|24.77 142 S 16|24.78 179 B 27|24.79 134 B 34|24.79 44 B 12|24.78 160 - 18|24.77 82 S 23|24.77 279 S 45|24.78 69 S 22|24.78 115 S 14|24.78 444 S 53|24.80 146 B 21|24.76 22 S 2|24.80 751 B 21|24.80 29 B 3|24.81 649 B 37|24.89 452 B 56|24.91 238 B 9|24.77 3412 - 349`;
const minuteAt = { 0: '14:55', 6: '14:56', 26: '14:57', 27: '15:00' };
document.getElementById('ticks').innerHTML = ticks.split('|').map((t, i) => {
  const [p, v, side, n] = t.split(' ');
  return `<tr class="${i && minuteAt[i] ? 'split' : ''}"><td>${minuteAt[i] || ''}</td><td>${p}</td><td class="${v > 500 ? 'large' : ''}">${v}</td><td class="${side}">${side === '-' ? '' : side}</td><td>${n}</td></tr>`;
}).join('');
```
